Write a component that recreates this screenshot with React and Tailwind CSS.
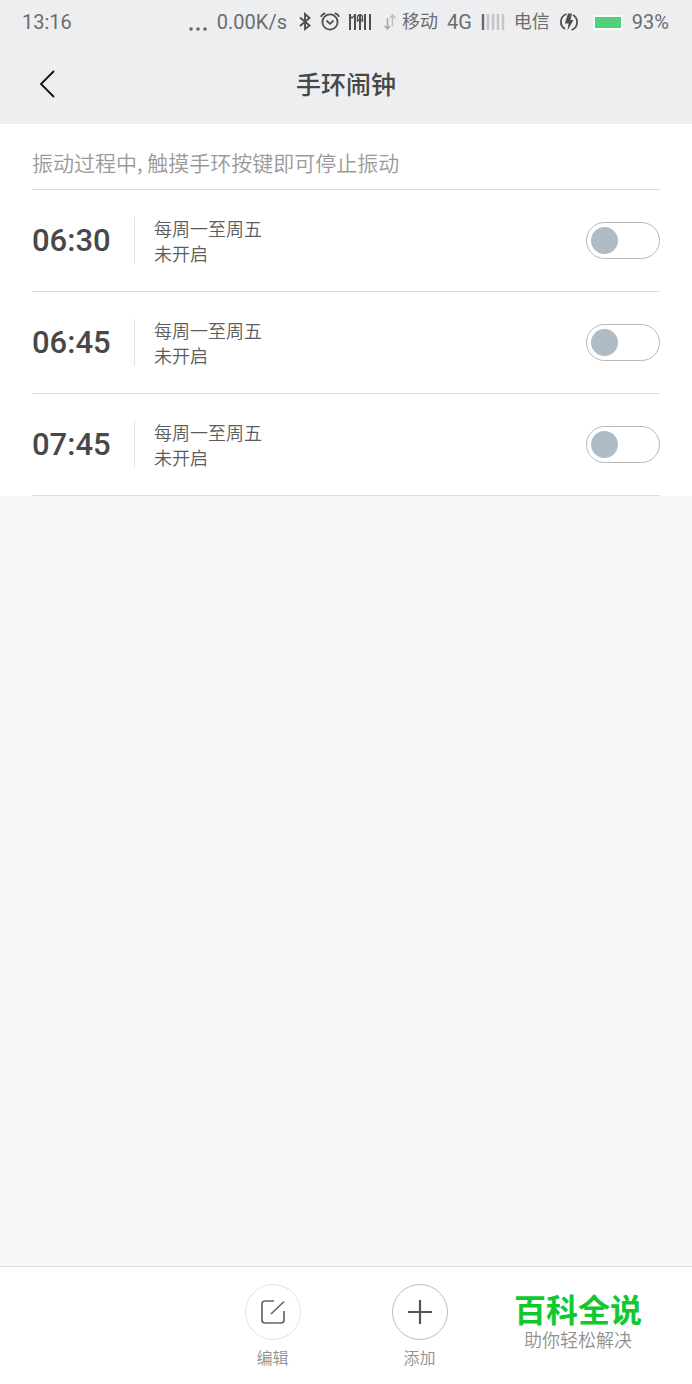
import { useState } from "react";

const initialAlarms = [
  { id: 1, time: "06:30", repeat: "每周一至周五", enabled: false },
  { id: 2, time: "06:45", repeat: "每周一至周五", enabled: false },
  { id: 3, time: "07:45", repeat: "每周一至周五", enabled: false },
];

function BluetoothIcon() {
  return (
    <svg width="14" height="20" viewBox="0 0 14 20" fill="none" stroke="#4f5052" strokeWidth="1.9">
      <path d="M2 5.5L11.5 13.5L7 17V2L11.5 6L2 14" />
    </svg>
  );
}

function AlarmIcon() {
  return (
    <svg width="20" height="20" viewBox="0 0 20 20" fill="none" stroke="#4f5052" strokeWidth="1.8">
      <circle cx="10" cy="10" r="7.6" />
      <path d="M6.5 8.5L10 11.8L13.5 8.5" />
      <path d="M0.8 4.8Q2.2 2.2 5.2 1.2M19.2 4.8Q17.8 2.2 14.8 1.2" />
    </svg>
  );
}

function FullSignalIcon() {
  return (
    <svg width="24" height="18" viewBox="0 0 24 18" fill="none" stroke="#4f5052" strokeWidth="2">
      <path d="M2 1V17M7 1V17M12 1V17M17 1V17M22 1V17" />
      <path d="M1 2L4 5L7 2M9.5 9V4Q9.5 2 12 2Q14.5 2 14.5 4V9M9.5 7H14.5" strokeWidth="1.3" />
    </svg>
  );
}

function WeakSignalIcon() {
  return (
    <svg width="24" height="18" viewBox="0 0 24 18" fill="none" strokeWidth="2.4">
      <path d="M2 1V17" stroke="#68696b" />
      <path d="M7 1V17M12 1V17M17 1V17M22 1V17" stroke="#c3c4c6" />
    </svg>
  );
}

function DataArrowsIcon() {
  return (
    <svg width="12" height="18" viewBox="0 0 12 18" fill="none" strokeWidth="1.5">
      <path d="M3.5 5V16M0.5 13L3.5 16L6 13" stroke="#a5a6a8" />
      <path d="M8.5 13V2M6 5L8.5 2L11.5 5" stroke="#bcbdbf" />
    </svg>
  );
}

function ChargeIcon() {
  return (
    <svg width="20" height="20" viewBox="0 0 20 20" fill="none" stroke="#4f5052" strokeWidth="1.8">
      <path d="M7.5 2A8.3 8.3 0 0 0 6 17M12.5 18A8.3 8.3 0 0 0 14 3" />
      <path d="M9 1.5H13L11.5 8H14.5L8.5 18.5L9.5 11.5H5.8Z" fill="#4f5052" stroke="none" />
    </svg>
  );
}

function StatusBar() {
  return (
    <div className="flex h-11 items-center justify-between pl-[22px] pr-[23px] text-xl text-[#6c6d6f]">
      <span>13:16</span>
      <div className="flex items-center gap-[9px]">
        <svg width="20" height="20" viewBox="0 0 20 20" fill="#68696b">
          <circle cx="3" cy="17" r="1.8" />
          <circle cx="10" cy="17" r="1.8" />
          <circle cx="17" cy="17" r="1.8" />
        </svg>
        <span>0.00K/s</span>
        <div className="flex items-center gap-2 pl-[2px]">
          <BluetoothIcon />
          <AlarmIcon />
          <FullSignalIcon />
        </div>
        <div className="flex items-center gap-[6px] pl-[3px]">
          <DataArrowsIcon />
          <span className="text-lg">移动</span>
        </div>
        <span>4G</span>
        <WeakSignalIcon />
        <span className="text-lg">电信</span>
        <ChargeIcon />
        <div className="ml-[5px] rounded-[3px] border-2 border-[#f6fbf8]">
          <div className="h-[11px] w-[26px] bg-[#50d07d]" />
        </div>
        <span>93%</span>
      </div>
    </div>
  );
}

function Header() {
  return (
    <div className="grid h-20 grid-cols-[1fr_auto_1fr] items-center px-8">
      <button aria-label="返回" className="flex h-12 w-12 items-center pl-[7px]">
        <svg width="17" height="28" viewBox="0 0 17 28" fill="none" stroke="#111" strokeWidth="1.9">
          <path d="M15 1L2 14L15 27" />
        </svg>
      </button>
      <h1 className="pt-1 text-[25px] font-medium text-[#464749]">手环闹钟</h1>
    </div>
  );
}

function AlarmRow({ alarm, onToggle }) {
  return (
    <li className="flex items-center border-b border-[#dcdcdc] py-[26px]">
      <label htmlFor={`alarm-${alarm.id}`} className="flex flex-1 items-center">
        <span className="w-[102px] text-[31px] leading-[49px] font-medium text-[#484848]">
          {alarm.time}
        </span>
        <span className="flex h-[47px] flex-col justify-center border-l border-[#e2e2e2] pt-[2px] pl-[19px] text-lg leading-[25px] font-[350] text-[#5c5c5c]">
          <span>{alarm.repeat}</span>
          <span>{alarm.enabled ? "已开启" : "未开启"}</span>
        </span>
      </label>
      <input
        id={`alarm-${alarm.id}`}
        type="checkbox"
        role="switch"
        checked={alarm.enabled}
        onChange={() => onToggle(alarm.id)}
        className="h-[37px] w-[74px] appearance-none rounded-full border border-[#b8b8b8] p-[4px] before:block before:h-[27px] before:w-[27px] before:rounded-full before:bg-[#afbbc5] checked:bg-[#50d07d] checked:before:ml-auto checked:before:bg-white"
      />
    </li>
  );
}

function ActionButton({ label, ring, children }) {
  return (
    <button className="flex w-14 flex-col items-center gap-[7px] text-base font-[350] text-[#909090]">
      <span className={`flex h-14 w-14 items-center justify-center rounded-full border ${ring}`}>
        {children}
      </span>
      {label}
    </button>
  );
}

export default function App() {
  const [alarms, setAlarms] = useState(initialAlarms);

  const toggleAlarm = (id) => {
    setAlarms((prev) =>
      prev.map((a) => (a.id === id ? { ...a, enabled: !a.enabled } : a))
    );
  };

  return (
    <div className="flex min-h-screen flex-col bg-[#f5f7f9] font-[Roboto,'Noto_Sans_CJK_SC',sans-serif]">
      <header className="bg-[#edeef0]">
        <StatusBar />
        <Header />
      </header>

      {/* Alarm list */}
      <main className="flex-1">
        <section className="bg-white px-8">
          <p className="border-b border-[#dcdcdc] pt-[23px] pb-3 font-['Noto_Sans_CJK_SC',sans-serif] text-[21px] leading-[30px] font-[350] text-[#999]">
            振动过程中, 触摸手环按键即可停止振动
          </p>
          <ul>
            {alarms.map((alarm) => (
              <AlarmRow key={alarm.id} alarm={alarm} onToggle={toggleAlarm} />
            ))}
          </ul>
        </section>
      </main>

      {/* Bottom actions */}
      <footer className="relative flex justify-center gap-[91px] border-t border-[#dcdddf] bg-white pt-[17px] pb-[13px]">
        <ActionButton label="编辑" ring="border-[#e2e2e2]">
          <svg width="26" height="26" viewBox="0 0 26 26" fill="none" stroke="#666" strokeWidth="1.7">
            <path d="M14 2H5Q2 2 2 5V21Q2 24 5 24H21Q24 24 24 21V12M11 15L24 2.5" />
          </svg>
        </ActionButton>
        <ActionButton label="添加" ring="border-[#bdbdbd]">
          <svg width="24" height="24" viewBox="0 0 24 24" fill="none" stroke="#555" strokeWidth="2.2">
            <path d="M12 0V24M0 12H24" />
          </svg>
        </ActionButton>
        <div className="absolute top-[26px] right-[50px] text-center">
          <p className="text-[32px] leading-9 font-bold text-[#0fc92f]">百科全说</p>
          <p className="text-lg leading-6 font-[350] text-[#909090]">助你轻松解决</p>
        </div>
      </footer>
    </div>
  );
}
